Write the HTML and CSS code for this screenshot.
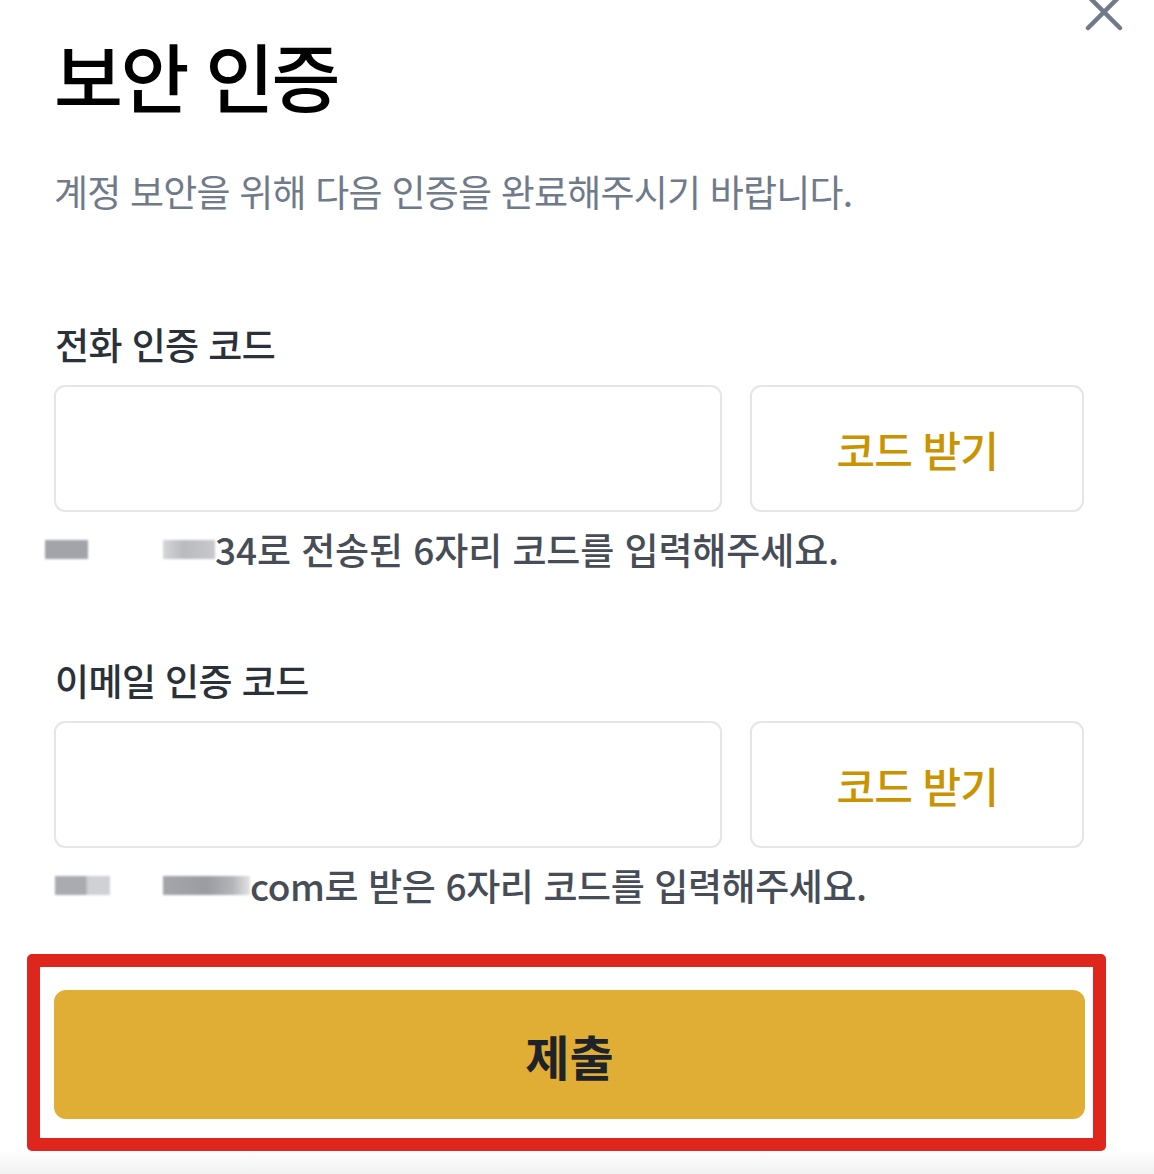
FILE: index.html
```html
<!DOCTYPE html>
<html lang="ko">
<head>
<meta charset="utf-8">
<link rel="stylesheet" href="styles.css">
</head>
<body>
<div class="modal">
  <button class="close" aria-label="닫기">
    <svg width="40" height="40" viewBox="0 0 40 40"><path d="M4 4 L36 36 M36 4 L4 36" stroke="#707a8a" stroke-width="4.5" stroke-linecap="round" fill="none"/></svg>
  </button>
  <h1 class="title">보안 인증</h1>
  <p class="subtitle">계정 보안을 위해 다음 인증을 완료해주시기 바랍니다.</p>

  <div class="field first">
    <label class="label">전화 인증 코드</label>
    <div class="row">
      <div class="input"></div>
      <button class="code-btn">코드 받기</button>
    </div>
    <p class="help"><span class="mask m1"></span><span class="mask m2"></span>34로 전송된 6자리 코드를 입력해주세요.</p>
  </div>

  <div class="field second">
    <label class="label">이메일 인증 코드</label>
    <div class="row">
      <div class="input"></div>
      <button class="code-btn">코드 받기</button>
    </div>
    <p class="help help2"><span class="mask m3"></span><span class="mask m4"></span>com로 받은 6자리 코드를 입력해주세요.</p>
  </div>

  <div class="highlight">
    <button class="submit">제출</button>
  </div>
</div>
</body>
</html>
```

FILE: styles.css
```css
* { box-sizing: border-box; }
html, body {
  margin: 0;
  padding: 0;
  background: #ffffff;
}
body {
  font-family: "Noto Sans CJK KR", "Noto Sans", sans-serif;
  width: 1154px;
  height: 1174px;
  overflow: hidden;
  background: linear-gradient(to bottom, #ffffff 0, #ffffff 1150px, #f1f1f1 1174px);
}
.modal {
  position: relative;
  padding: 0 70px 0 54px;
}
.close {
  position: absolute;
  top: -8px;
  right: 30px;
  border: 0;
  background: none;
  padding: 0;
  width: 40px;
  height: 40px;
}
.title {
  margin: 0;
  padding-top: 25px;
  font-size: 75px;
  line-height: 100px;
  font-weight: 500;
  color: #000;
  letter-spacing: -2.6px;
}
.subtitle {
  margin: 46px 0 0;
  font-size: 37px;
  line-height: 40px;
  color: #707a8a;
  letter-spacing: -0.8px;
}
.field.first { margin-top: 113px; }
.field.second { margin-top: 90px; }
.label {
  display: block;
  font-size: 37px;
  line-height: 40px;
  font-weight: 500;
  color: #2b3139;
  letter-spacing: -0.6px;
  margin-left: 1px;
}
.row {
  display: flex;
  gap: 28px;
  margin-top: 21px;
}
.input {
  width: 669px;
  height: 127px;
  border: 2px solid #e3e5e8;
  border-radius: 11px;
}
.code-btn {
  width: 334px;
  height: 127px;
  border: 2px solid #e3e5e8;
  border-radius: 11px;
  background: #fff;
  font-family: inherit;
  font-size: 42px;
  font-weight: 500;
  color: #c99400;
  letter-spacing: -1px;
  padding: 0;
}
.help {
  margin: 16px 0 0 -9px;
  font-size: 37px;
  line-height: 42px;
  font-weight: 500;
  color: #474d57;
  letter-spacing: -0.1px;
  display: flex;
  align-items: center;
}
.help2 { margin-left: 1px; letter-spacing: -0.4px; }
.mask {
  display: inline-block;
  height: 19px;
  filter: blur(0.8px);
}
.m1 { width: 43px; background: #a2a4aa; margin-right: 75px; }
.m2 { width: 52px; background: linear-gradient(to right, #d6d6d8, #b8babe 40%, #c9c9cc); }
.m3 { width: 55px; background: linear-gradient(to right, #a9abb0 0, #a9abb0 55%, #d0d1d4 60%, #d0d1d4 100%); margin-right: 53px; }
.m4 { width: 87px; background: linear-gradient(to right, #a4a6ab, #9a9ca1 50%, #b3b5b9 80%, #e3e3e5); }
.highlight {
  margin: 48px 0 0 -27px;
  width: 1079px;
  height: 197px;
  border: 13px solid #df261c;
  border-radius: 5px;
  padding: 23px 0 0 14px;
}
.submit {
  width: 1031px;
  height: 129px;
  border: 0;
  border-radius: 12px;
  background: #e1ae35;
  font-family: inherit;
  font-size: 48px;
  font-weight: 700;
  color: #1e2329;
  padding: 0;
}
```
